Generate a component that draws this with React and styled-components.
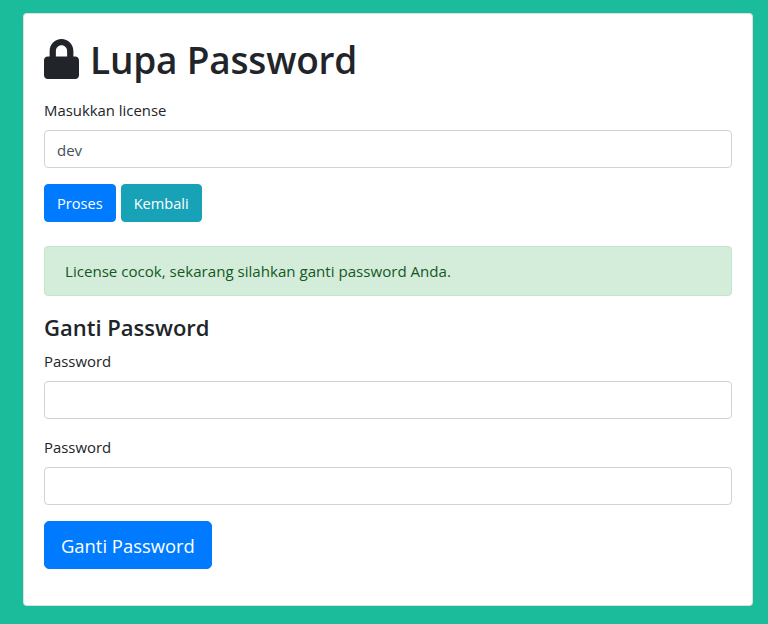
import React from 'react'
import styled, { createGlobalStyle } from 'styled-components'
import { FaLock } from 'react-icons/fa'

const GlobalStyle = createGlobalStyle`
  * { box-sizing: border-box; }
  html, body { margin: 0; }
  body {
    background: #1abc9c;
    color: #212529;
    font-family: "Open Sans", "Noto Sans", sans-serif;
    font-size: 16px;
    line-height: 1.5;
  }
`

const Page = styled.div`
  padding: 13px 15px 18px 23px;
`

const Card = styled.div`
  background: #fff;
  border: 1px solid rgba(0, 0, 0, 0.125);
  border-radius: 4px;
  padding: 20px;
`

const Title = styled.h1`
  display: flex;
  align-items: center;
  gap: 11px;
  height: 49px;
  margin: 0 0 15px;
  padding-top: 1px;
  font-size: 37px;
  font-weight: 600;
  line-height: 48px;
  letter-spacing: -0.2px;

  svg {
    width: 35px;
    height: 40px;
    flex: none;
  }
`

const TitleText = styled.span`
  padding-top: 2px;
`

const SubTitle = styled.h4`
  margin: 0 0 8px;
  padding-top: 2px;
  font-size: 22px;
  font-weight: 600;
  line-height: 27px;
`

const Field = styled.div`
  margin-bottom: 16px;
`

const Label = styled.label`
  display: block;
  margin-bottom: 8px;
  font-size: 14.9px;
  line-height: 24px;
`

const Input = styled.input`
  display: block;
  width: 100%;
  height: 38px;
  padding: 7px 12px 5px;
  border: 1px solid #ced4da;
  border-radius: 4px;
  background: #fff;
  color: #495057;
  font: inherit;
  font-size: 15px;
  outline: none;
`

const Buttons = styled.div`
  display: flex;
  gap: 5px;
  margin-bottom: 24px;
`

const Button = styled.button`
  height: ${p => (p.$large ? '48px' : '38px')};
  padding: ${p => (p.$large ? '0 16px' : '0 12px')};
  border: 1px solid ${p => (p.$info ? '#17a2b8' : '#007bff')};
  border-radius: ${p => (p.$large ? '5px' : '4px')};
  background: ${p => (p.$info ? '#17a2b8' : '#007bff')};
  color: #fff;
  font-family: inherit;
  font-size: ${p => (p.$large ? '18.4px' : '14.6px')};
  cursor: pointer;
`

const Alert = styled.div`
  height: 50px;
  margin-bottom: 16px;
  padding: 12px 20px;
  border: 1px solid #c3e6cb;
  border-radius: 4px;
  background: #d4edda;
  color: #155724;
  font-size: 15.1px;
  line-height: 24px;
`

const App = () => (
  <>
    <GlobalStyle />
    <Page>
      <Card>
        <Title><FaLock /><TitleText>Lupa Password</TitleText></Title>
        <Field>
          <Label>Masukkan license</Label>
          <Input defaultValue="dev" />
        </Field>
        <Buttons>
          <Button>Proses</Button>
          <Button $info>Kembali</Button>
        </Buttons>
        <Alert>License cocok, sekarang silahkan ganti password Anda.</Alert>
        <SubTitle>Ganti Password</SubTitle>
        <Field>
          <Label>Password</Label>
          <Input type="password" />
        </Field>
        <Field>
          <Label>Password</Label>
          <Input type="password" />
        </Field>
        <Field>
          <Button $large>Ganti Password</Button>
        </Field>
      </Card>
    </Page>
  </>
)

export default App
